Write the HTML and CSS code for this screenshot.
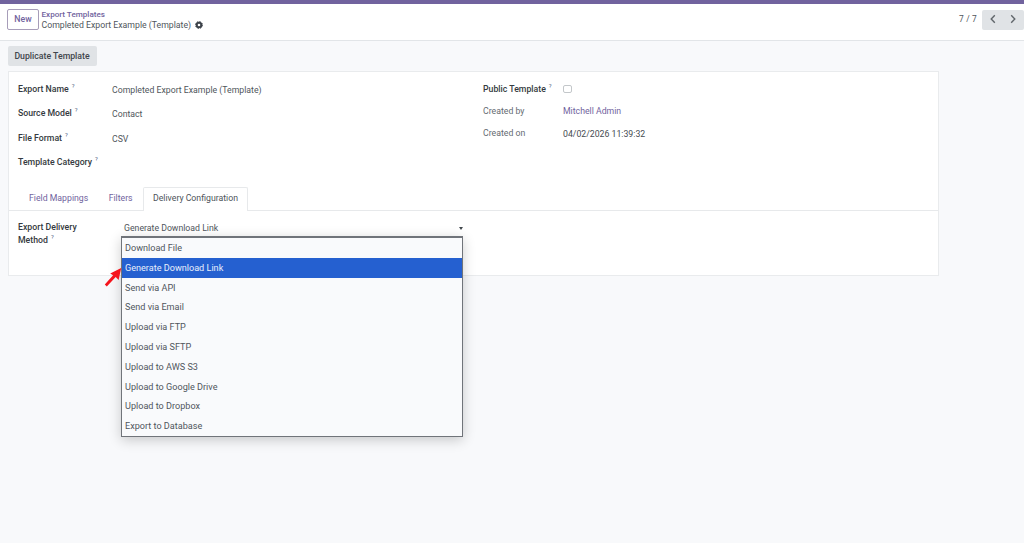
FILE: index.html
```html
<!DOCTYPE html>
<html lang="en">
<head>
<meta charset="utf-8">
<title>Export Templates</title>
<link rel="stylesheet" href="styles.css">
</head>
<body>
<div class="topbar"></div>
<header class="control">
  <button class="btn-new">New</button>
  <div class="crumbs">
    <a class="crumb-link"><span>Export Templates</span></a>
    <div class="crumb-current"><span>Completed Export Example (Template)</span>
      <svg class="gear" viewBox="0 0 16 16"><circle cx="8" cy="8" r="4.6" fill="none" stroke="#3d434a" stroke-width="4"/><circle cx="8" cy="8" r="6.9" fill="none" stroke="#3d434a" stroke-width="2" stroke-dasharray="2.9 2.52"/></svg>
    </div>
  </div>
  <div class="pager">
    <span class="count">7 / 7</span>
    <div class="pager-buttons">
      <svg viewBox="0 0 10 10"><path d="M6.8 1.2 3.2 5l3.6 3.8"/></svg>
      <svg viewBox="0 0 10 10"><path d="M3.2 1.2 6.8 5 3.2 8.8"/></svg>
    </div>
  </div>
</header>
<main class="content">
  <button class="btn-duplicate">Duplicate Template</button>
  <section class="sheet">
    <div class="groups">
      <div class="group main-group">
        <div class="label"><span>Export Name</span><sup>?</sup></div><div class="value"><span>Completed Export Example (Template)</span></div>
        <div class="label"><span>Source Model</span><sup>?</sup></div><div class="value"><span>Contact</span></div>
        <div class="label"><span>File Format</span><sup>?</sup></div><div class="value"><span>CSV</span></div>
        <div class="label"><span>Template Category</span><sup>?</sup></div><div class="value"></div>
      </div>
      <div class="group info-group">
        <div class="label"><span>Public Template</span><sup>?</sup></div><div class="value"><i class="checkbox"></i></div>
        <div class="label muted"><span>Created by</span></div><div class="value link"><span>Mitchell Admin</span></div>
        <div class="label muted"><span>Created on</span></div><div class="value dark"><span>04/02/2026 11:39:32</span></div>
      </div>
    </div>
    <nav class="tabs">
      <a class="tab">Field Mappings</a>
      <a class="tab">Filters</a>
      <a class="tab active">Delivery Configuration</a>
    </nav>
    <div class="delivery">
      <div class="delivery-label">Export Delivery<br>Method<sup>?</sup></div>
      <div class="select">
        <span>Generate Download Link</span><i class="caret"></i>
        <ul class="menu">
          <li>Download File</li>
          <li class="selected">Generate Download Link</li>
          <li>Send via API</li>
          <li>Send via Email</li>
          <li>Upload via FTP</li>
          <li>Upload via SFTP</li>
          <li>Upload to AWS S3</li>
          <li>Upload to Google Drive</li>
          <li>Upload to Dropbox</li>
          <li>Export to Database</li>
        </ul>
        <svg class="pointer" viewBox="0 0 18 20"><path d="M17.2 1 14.6 13 11.7 10.1 2.8 19.5.8 17.5 9.1 8.3 6.2 6.5Z" fill="#f5141c"/></svg>
      </div>
    </div>
  </section>
</main>
</body>
</html>
```
FILE: styles.css
```css
* { box-sizing: border-box; }
body { margin: 0; height: 543px; overflow: hidden; background: #f8f9fb; color: #50565c; font: 8.72px/12px Roboto, sans-serif; }
button { font: inherit; padding: 0; }
.topbar { height: 4px; background: #71639e; }
.control { height: 37px; display: flex; align-items: flex-start; padding: 5px 0 0 7px; background: #fff; border-bottom: 1px solid #e2e5e8; }
.btn-new { width: 32px; height: 21px; padding-bottom: 1px; border: 1px solid #a79db9; border-radius: 2px; background: #fff; color: #71639e; font-weight: 500; }
.crumbs { margin-left: 2.5px; line-height: 10px; }
.crumb-link { display: block; margin-bottom: 1px; color: #71639e; font-size: 8.1px; font-weight: 500; }
.crumb-current { display: flex; align-items: center; gap: 4px; }
.gear { width: 8px; height: 8px; }
.pager { display: flex; align-items: center; gap: 5px; margin-left: auto; height: 21px; }
.count { margin-top: -1px; font-size: 8.4px; letter-spacing: .2px; }
.pager-buttons { display: flex; align-items: center; gap: 10px; width: 42px; height: 20px; padding-left: 5.5px; border-radius: 2px; background: #e0e3e6; }
.pager-buttons svg { width: 10px; height: 10px; margin-top: -1px; fill: none; stroke: #60666b; stroke-width: 1.4; }
.content { padding: 5px 0 0 8px; }
.btn-duplicate { display: block; width: 89px; height: 20px; padding-right: 1px; border: 0; border-radius: 2px; background: #e0e3e6; color: #40464c; font-weight: 500; }
.sheet { width: 931px; height: 205px; margin-top: 5px; background: #fff; border: 1px solid #e9ebed; }
.groups { display: flex; height: 115px; padding: 5px 0 0 9px; }
.group { display: grid; align-content: start; }
.main-group { width: 465px; grid-template-columns: 94px 1fr; grid-auto-rows: 24.4px; }
.info-group { grid-template-columns: 80px 120px; grid-auto-rows: 22.4px; }
.label { padding-top: 6px; color: #343a40; font-weight: 500; white-space: nowrap; }
.value { padding-top: 7px; }
.muted { padding-top: 5.5px; color: #656b71; font-weight: 400; }
.link { padding-top: 6px; color: #71639e; }
.dark { padding-top: 6px; color: #454b51; }
sup { margin-left: 3px; font-size: 6px; line-height: 0; font-weight: 400; color: #568; }
.checkbox { display: block; width: 9px; height: 8px; margin-top: 1px; border: 1px solid #c3c7ca; border-radius: 2px; }
.tabs { display: flex; height: 24px; padding-left: 9px; border-bottom: 1px solid #e7e9eb; }
.tab { height: 24px; padding: 4px 9.2px 5px; color: #71639e; border: 1px solid transparent; border-bottom: 0; white-space: nowrap; }
.tab:first-child { padding-left: 10px; }
.tab.active { padding: 4px 9.2px 5px; color: #4d5359; background: #fff; border-color: #e7e9eb; border-radius: 2px 2px 0 0; }
.delivery { display: flex; padding: 10px 0 0 9px; }
.delivery-label { width: 103px; line-height: 12.5px; color: #343a40; font-weight: 500; }
.select { position: relative; width: 342px; height: 16px; padding: 1px 0 0 3px; }
.caret { position: absolute; right: 0; top: 6px; border: 2px solid transparent; border-top: 3px solid #40464c; border-bottom: 0; }
.menu { position: absolute; left: 0; top: 15px; width: 342px; height: 201px; margin: 0; padding: 0; list-style: none; background: #f9fafc; border: 1px solid #70747a; border-top-width: 2px; box-shadow: 0 3px 12px rgba(0,0,0,.2); font-size: 9.1px; }
.menu li { height: 19.8px; padding-left: 3px; line-height: 21.4px; }
.menu .selected { background: #2560d0; color: #e8effc; }
.pointer { position: absolute; left: -17px; top: 46px; width: 18px; height: 20px; }
```
